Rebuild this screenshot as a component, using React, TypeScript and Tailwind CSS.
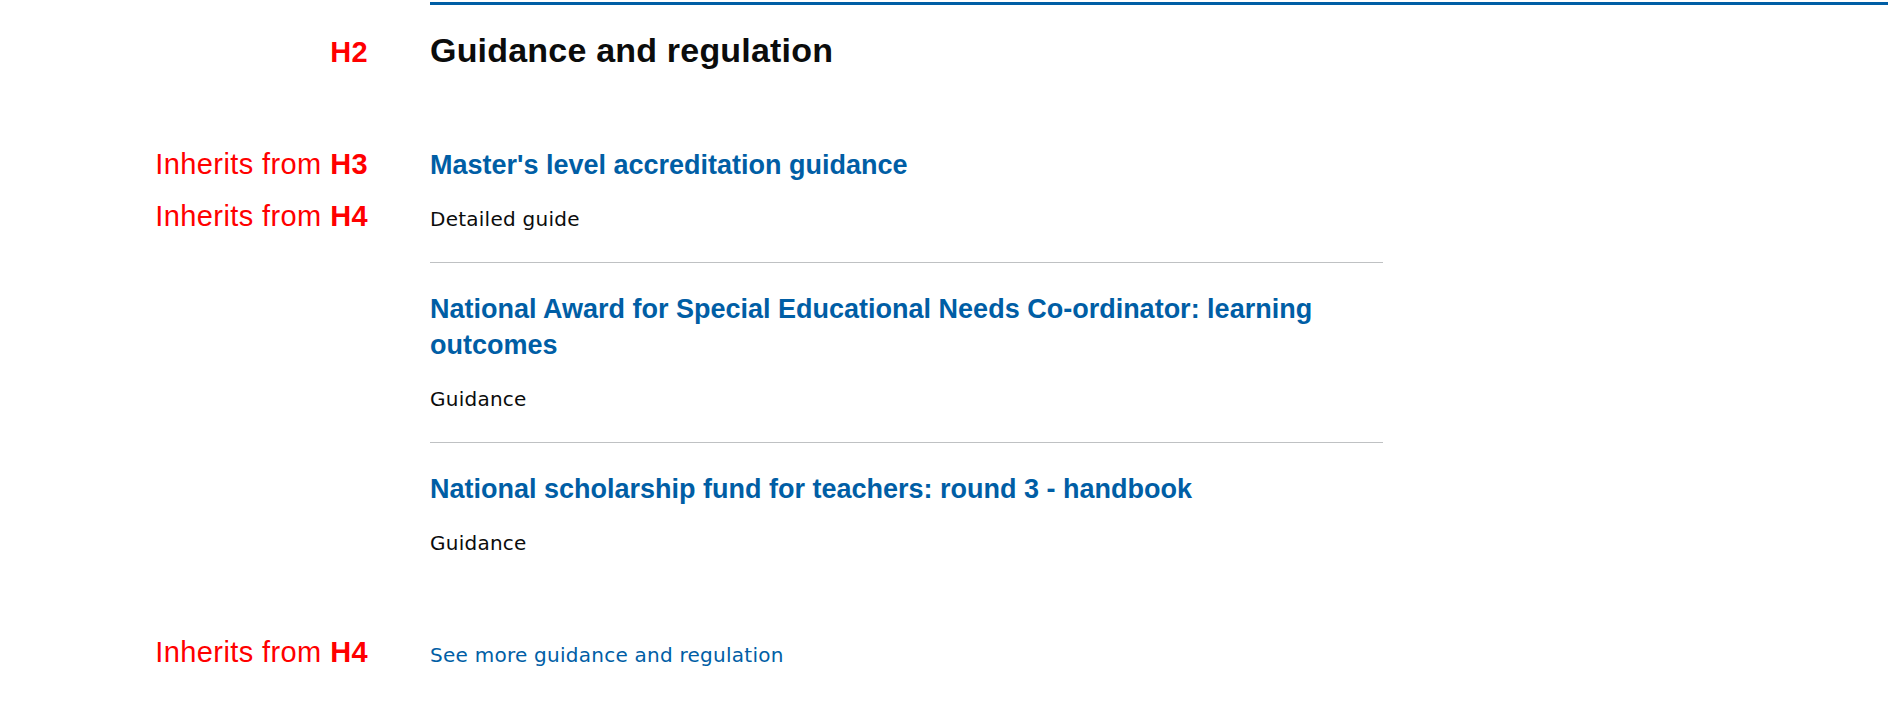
import React from "react";

const sans = "font-['Liberation_Sans',Arial,sans-serif]";
const body = "font-['DejaVu_Sans',Verdana,sans-serif]";

type RowProps = {
  label?: string;
  tag?: string;
  className?: string;
  children: React.ReactNode;
};

// annotation on the left, content column on the right
const Row = ({ label, tag, className = "", children }: RowProps) => (
  <div className="flex items-baseline">
    <div
      className={`w-[368px] shrink-0 text-right text-[29px] leading-[36px] tracking-[0.4px] text-[#ff0000] ${sans}`}
    >
      {label && <span>{label} </span>}
      {tag && <span className="font-bold">{tag}</span>}
    </div>
    <div className={`ml-[62px] ${className}`}>{children}</div>
  </div>
);

const App = () => {
  const items = [
    {
      id: 1,
      title: "Master's level accreditation guidance",
      type: "Detailed guide",
    },
    {
      id: 2,
      title:
        "National Award for Special Educational Needs Co-ordinator: learning outcomes",
      type: "Guidance",
    },
    {
      id: 3,
      title: "National scholarship fund for teachers: round 3 - handbook",
      type: "Guidance",
    },
  ];

  return (
    <div className="min-h-screen bg-white pt-[2px] text-[#0b0c0c]">
      {/* Section heading */}
      <Row tag="H2" className="flex-1 border-t-[3px] border-[#005ea5] pt-[25px]">
        <h2 className={`text-[34px] font-bold leading-[40px] tracking-[0.2px] ${sans}`}>
          Guidance and regulation
        </h2>
      </Row>

      {/* Documents */}
      <div className="mt-[49px]">
        {items.map((item, i) => (
          <div key={item.id}>
            <Row
              label={i === 0 ? "Inherits from" : undefined}
              tag={i === 0 ? "H3" : undefined}
              className={`w-[953px] pt-[28px] ${i > 0 ? "border-t border-[#bfc1c3]" : ""}`}
            >
              <h3>
                <a
                  href="#"
                  className={`text-[27px] font-bold leading-[36px] text-[#005ea5] ${sans}`}
                >
                  {item.title}
                </a>
              </h3>
            </Row>
            <Row
              label={i === 0 ? "Inherits from" : undefined}
              tag={i === 0 ? "H4" : undefined}
              className="w-[953px] pt-[24px] pb-[30px]"
            >
              <p className={`text-[20px] leading-[25px] tracking-[0.25px] ${body}`}>
                {item.type}
              </p>
            </Row>
          </div>
        ))}
      </div>

      {/* See more */}
      <div className="mt-[48px]">
        <Row label="Inherits from" tag="H4">
          <a
            href="#"
            className={`text-[20px] leading-[25px] tracking-[0.25px] text-[#005ea5] ${body}`}
          >
            See more guidance and regulation
          </a>
        </Row>
      </div>
    </div>
  );
};

export default App;
